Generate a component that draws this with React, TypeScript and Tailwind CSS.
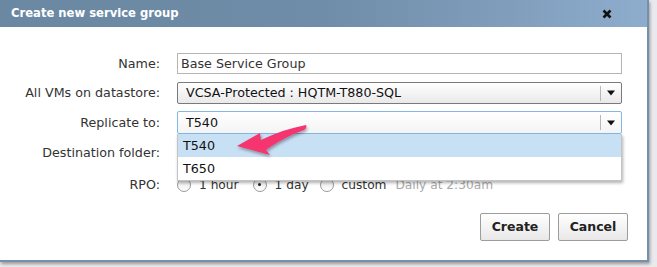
import { ReactNode } from "react";

const font = { fontFamily: '"DejaVu Sans", Verdana, sans-serif' };

function Label({ children }: { children: ReactNode }) {
  return <div className="w-[160px] shrink-0 text-right text-[12.7px] text-[#333]">{children}</div>;
}

function Caret() {
  return (
    <div className="flex h-full items-center">
      <div className="h-[15px] w-px bg-[#b8b8b8]" />
      <svg width="20" height="8" viewBox="0 0 20 8">
        <path d="M6 1.5h8l-4 5z" fill="#111" />
      </svg>
    </div>
  );
}

function Radio({ checked, label }: { checked?: boolean; label: string }) {
  return (
    <div className="flex items-center gap-[8px]">
      <div className="flex h-[14px] w-[14px] items-center justify-center rounded-full border border-[#9a9a9a] bg-gradient-to-b from-[#e6e6e6] to-white">
        {checked && <div className="h-[3px] w-[3px] rounded-full bg-[#222]" />}
      </div>
      <span className="text-[12.2px] text-[#333]">{label}</span>
    </div>
  );
}

export default function App() {
  return (
    <div className="h-[267px] w-[657px] overflow-hidden bg-[#eaeaee]" style={font}>
      <div className="relative h-[262px] w-[649px] border-b-2 border-r-2 border-[#7590ab] bg-white shadow-[1px_2px_3px_rgba(0,0,0,0.35)]">
        <div className="flex h-[27px] items-center justify-between bg-gradient-to-r from-[#6b88a2] via-[#6f8ca8] to-[#8eaccc] pl-[11px] pr-[35px]">
          <span className="text-[11.6px] font-bold text-white">Create new service group</span>
          <svg width="10" height="10" viewBox="0 0 10 10">
            <path d="M1.5 1.5l7 7M8.5 1.5l-7 7" stroke="#111" strokeWidth="2.6" />
          </svg>
        </div>

        <div className="flex flex-col pt-[26px]">
          <div className="flex h-[21px] items-center gap-[17px]">
            <Label>Name:</Label>
            <div className="flex h-[21px] w-[445px] items-center border border-[#b5b5b5] pl-[3px] text-[12.7px] text-[#333]">
              Base Service Group
            </div>
          </div>

          <div className="mt-[8px] flex h-[22px] items-center gap-[17px]">
            <Label>All VMs on datastore:</Label>
            <div className="flex h-[22px] w-[445px] items-center justify-between rounded-[2px] border border-[#7a7a7a] bg-gradient-to-b from-white to-[#e9e9e9] pl-[8px] text-[12.7px] text-[#111]">
              <span>VCSA-Protected : HQTM-T880-SQL</span>
              <Caret />
            </div>
          </div>

          <div className="relative mt-[7px] flex h-[23px] items-center gap-[17px]">
            <Label>Replicate to:</Label>
            <div className="flex h-[23px] w-[445px] items-center justify-between rounded-[2px] border border-[#83b7e8] bg-gradient-to-b from-white to-[#f4f4f4] pl-[8px] text-[12.7px] text-[#111]">
              <span>T540</span>
              <Caret />
            </div>
            <div className="absolute left-[177px] top-[23px] z-10 w-[445px] border border-t-0 border-[#c4c4c4] bg-white text-[12.7px] text-[#111] shadow-[1px_2px_3px_rgba(0,0,0,0.3)]">
              <div className="flex h-[23px] items-center bg-[#c7e0f4] pl-[5px]">T540</div>
              <div className="flex h-[23px] items-center pl-[5px]">T650</div>
            </div>
          </div>

          <div className="mt-[7px] flex h-[23px] items-center gap-[17px]">
            <Label>Destination folder:</Label>
          </div>

          <div className="mt-[11px] flex h-[20px] items-center gap-[17px]">
            <Label>RPO:</Label>
            <div className="flex items-center">
              <Radio label="1 hour" />
              <div className="ml-[14px]">
                <Radio checked label="1 day" />
              </div>
              <div className="ml-[11px]">
                <Radio label="custom" />
              </div>
              <span className="ml-[9px] text-[12.2px] text-[#aaa]">Daily at 2:30am</span>
            </div>
          </div>

          <div className="mt-[18px] flex justify-end gap-[8px] pr-[19px]">
            <button className="h-[28px] w-[70px] rounded-[2px] border border-[#9c9c9c] bg-gradient-to-b from-white to-[#e8e8e8] text-[12.5px] font-bold text-[#222]">
              Create
            </button>
            <button className="h-[28px] w-[70px] rounded-[2px] border border-[#9c9c9c] bg-gradient-to-b from-white to-[#e8e8e8] text-[12.5px] font-bold text-[#222]">
              Cancel
            </button>
          </div>
        </div>

        <svg className="absolute left-[230px] top-[118px] z-20" width="85" height="45" viewBox="0 0 85 45">
          <defs>
            <filter id="sh" x="-20%" y="-20%" width="140%" height="160%">
              <feDropShadow dx="1" dy="2" stdDeviation="1.5" floodColor="#000" floodOpacity="0.35" />
            </filter>
          </defs>
          <path
            d="M7 28 L30 15 L31 22 C45 15 60 10 76 7 C77 9 76 11 74 12 C60 17 47 24 36 32 L40 37 Z"
            fill="#f5346f"
            filter="url(#sh)"
          />
        </svg>
      </div>
    </div>
  );
}
